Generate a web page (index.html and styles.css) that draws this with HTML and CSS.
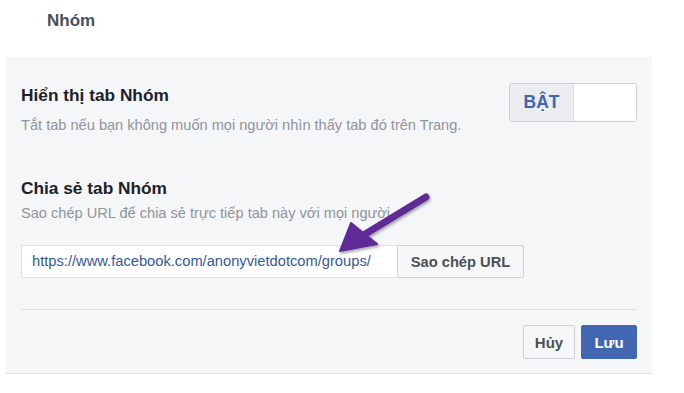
FILE: index.html
```html
<!DOCTYPE html>
<html lang="vi">

<head>
    <meta charset="UTF-8">
    <meta name="viewport" content="width=device-width, initial-scale=1.0">
    <title>Nhóm</title>
    <link rel="stylesheet" href="styles.css">
</head>

<body>
    <h1 class="page-title">Nhóm</h1>

    <div class="panel">
        <div class="setting-row">
            <div class="setting-text">
                <h2 class="setting-title">Hiển thị tab Nhóm</h2>
                <p class="setting-desc">Tắt tab nếu bạn không muốn mọi người nhìn thấy tab đó trên Trang.</p>
            </div>
            <div class="toggle">
                <span class="toggle-on">BẬT</span>
                <span class="toggle-off"></span>
            </div>
        </div>

        <h2 class="setting-title share-title">Chia sẻ tab Nhóm</h2>
        <p class="setting-desc share-desc">Sao chép URL để chia sẻ trực tiếp tab này với mọi người.</p>
        <div class="url-row">
            <input type="text" class="url-field" value="https://www.facebook.com/anonyvietdotcom/groups/" readonly>
            <button class="copy-btn">Sao chép URL</button>
        </div>

        <div class="divider"></div>

        <div class="actions">
            <button class="btn btn-cancel">Hủy</button>
            <button class="btn btn-save">Lưu</button>
        </div>
    </div>

    <!-- annotation arrow pointing at the url -->
    <svg class="arrow" width="110" height="80" viewBox="330 185 110 80">
        <defs>
            <filter id="shadow" x="-20%" y="-20%" width="140%" height="140%">
                <feDropShadow dx="1" dy="2" stdDeviation="1.5" flood-color="#000" flood-opacity="0.35"/>
            </filter>
        </defs>
        <g filter="url(#shadow)" fill="#5f2a96" stroke="#5f2a96">
            <line x1="426" y1="197" x2="362" y2="236" stroke-width="7" stroke-linecap="round"/>
            <polygon points="340,251 351,223 377,244" stroke-width="2" stroke-linejoin="round"/>
        </g>
    </svg>
</body>

</html>
```

FILE: styles.css
```css
body {
    margin: 0;
    font-family: "Liberation Sans", Arial, sans-serif;
    background-color: #fff;
    position: relative;
}

.page-title {
    margin: 0;
    padding: 11px 0 26px 47px;
    font-size: 17px;
    line-height: 20px;
    font-weight: bold;
    color: #4b4f56;
}

.panel {
    margin-left: 6px;
    width: 646px;
    box-sizing: border-box;
    padding: 26px 15px 14px 15px;
    background-color: #f5f6f7;
    border-bottom: 1px solid #dddfe2;
}

.setting-row {
    display: flex;
    justify-content: space-between;
    align-items: flex-start;
}

.setting-title {
    margin: 2px 0 0 0;
    font-size: 17.3px;
    line-height: 20px;
    font-weight: bold;
    color: #1d2129;
}

.setting-desc {
    margin: 11px 0 0 0;
    font-size: 14.6px;
    line-height: 18px;
    color: #90949c;
}

.toggle {
    display: flex;
    width: 128px;
    height: 39px;
    box-sizing: border-box;
    border: 1px solid #ccd0d5;
    border-radius: 3px;
    overflow: hidden;
}

.toggle-on {
    width: 63px;
    display: flex;
    align-items: center;
    justify-content: center;
    background-color: #ebedf0;
    border-right: 1px solid #dddfe2;
    color: #4267b2;
    font-size: 17.5px;
    font-weight: bold;
}

.toggle-off {
    flex: 1;
    background-color: #fff;
}

.share-title {
    margin-top: 44px;
}

.share-desc {
    margin-top: 6px;
}

.url-row {
    display: flex;
    margin-top: 23px;
    height: 33px;
}

.url-field {
    width: 376px;
    box-sizing: border-box;
    margin: 0;
    padding: 0 10px 2px 10px;
    border: 1px solid #dddfe2;
    border-right: none;
    background-color: #fff;
    font-family: "Liberation Sans", Arial, sans-serif;
    font-size: 14.7px;
    color: #365899;
    outline: none;
}

.copy-btn {
    width: 127px;
    box-sizing: border-box;
    margin: 0;
    border: 1px solid #ced0d4;
    border-radius: 2px;
    background-color: #f6f7f9;
    font-family: "Liberation Sans", Arial, sans-serif;
    font-size: 14.7px;
    font-weight: bold;
    color: #4b4f56;
}

.divider {
    height: 1px;
    margin-top: 31px;
    background-color: #dddfe2;
}

.actions {
    display: flex;
    justify-content: flex-end;
    gap: 6px;
    margin-top: 15px;
}

.btn {
    height: 34px;
    box-sizing: border-box;
    margin: 0;
    padding: 0;
    border-radius: 2px;
    font-family: "Liberation Sans", Arial, sans-serif;
    font-size: 15px;
    font-weight: bold;
}

.btn-cancel {
    width: 52px;
    border: 1px solid #ced0d4;
    background-color: #f6f7f9;
    color: #4b4f56;
}

.btn-save {
    width: 56px;
    border: 1px solid #4267b2;
    background-color: #4267b2;
    color: #fff;
}

.arrow {
    position: absolute;
    left: 330px;
    top: 185px;
}
```
